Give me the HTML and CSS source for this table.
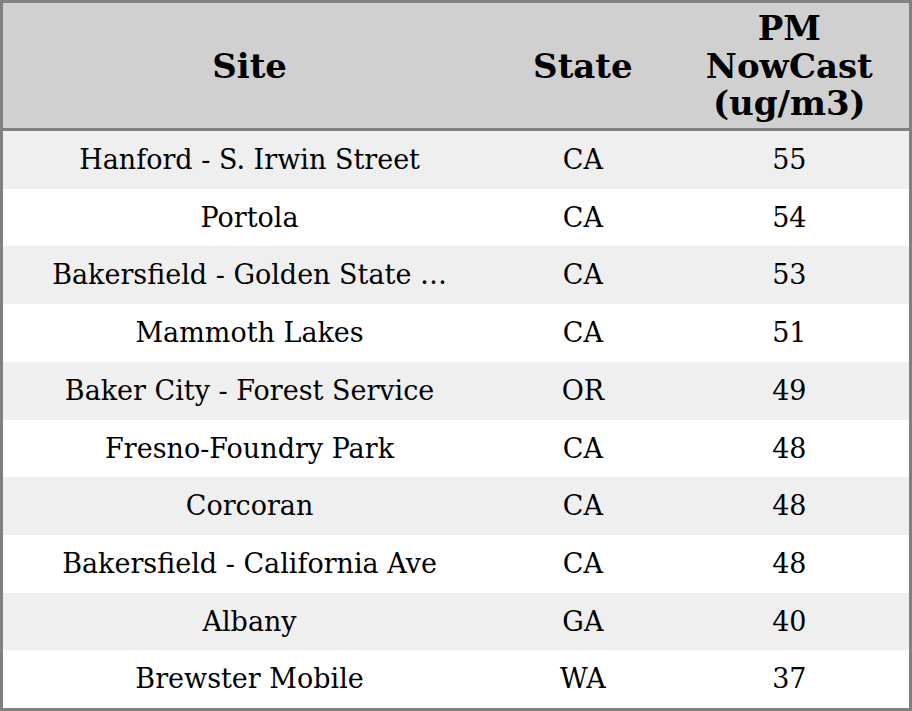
FILE: index.html
```html
<!DOCTYPE html>
<html>
<head>
<meta charset="utf-8">
<link rel="stylesheet" href="styles.css">
</head>
<body>
<table class="aq-table">
  <colgroup>
    <col class="col-site">
    <col class="col-state">
    <col class="col-pm">
  </colgroup>
  <thead>
    <tr>
      <th>Site</th>
      <th>State</th>
      <th>PM<br>NowCast<br>(ug/m3)</th>
    </tr>
  </thead>
  <tbody>
    <tr><td>Hanford - S. Irwin Street</td><td>CA</td><td>55</td></tr>
    <tr><td>Portola</td><td>CA</td><td>54</td></tr>
    <tr><td>Bakersfield - Golden State …</td><td>CA</td><td>53</td></tr>
    <tr><td>Mammoth Lakes</td><td>CA</td><td>51</td></tr>
    <tr><td>Baker City - Forest Service</td><td>OR</td><td>49</td></tr>
    <tr><td>Fresno-Foundry Park</td><td>CA</td><td>48</td></tr>
    <tr><td>Corcoran</td><td>CA</td><td>48</td></tr>
    <tr><td>Bakersfield - California Ave</td><td>CA</td><td>48</td></tr>
    <tr><td>Albany</td><td>GA</td><td>40</td></tr>
    <tr><td>Brewster Mobile</td><td>WA</td><td>37</td></tr>
  </tbody>
</table>
</body>
</html>
```
FILE: styles.css
```css
html, body {
  margin: 0;
  padding: 0;
  background: #ffffff;
}

.aq-table {
  width: 912px;
  table-layout: fixed;
  border-collapse: collapse;
  border: 3px solid #808080;
  font-family: "DejaVu Serif", serif;
  color: #000;
}

.col-site { width: 493px; }
.col-state { width: 173px; }
.col-pm { width: 240px; }

.aq-table th {
  background: #d0d0d0;
  font-size: 34px;
  font-weight: bold;
  line-height: 37.4px;
  padding: 7.4px 0 5.4px;
  text-align: center;
  vertical-align: middle;
  border-bottom: 3px solid #808080;
}

.aq-table td {
  font-size: 27px;
  line-height: 57.7px;
  padding: 0;
  text-align: center;
  vertical-align: middle;
  white-space: nowrap;
  overflow: hidden;
}

.aq-table tbody tr:nth-child(odd) td {
  background: #efefef;
}
```
